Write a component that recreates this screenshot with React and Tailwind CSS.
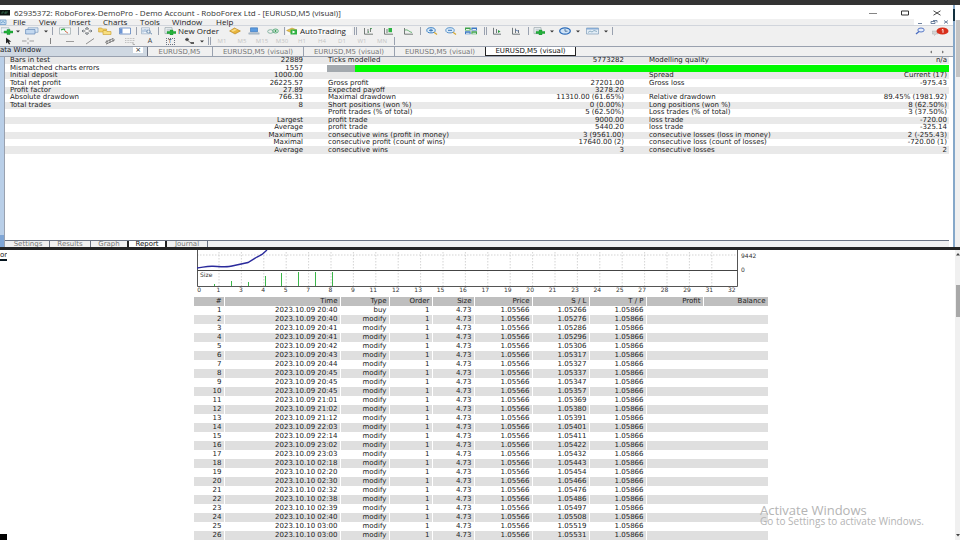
import React from "react";
import clsx from "clsx";

const menuItems = [
  { label: "File", width: "w-[26px]" },
  { label: "View", width: "w-[30px]" },
  { label: "Insert", width: "w-[34px]" },
  { label: "Charts", width: "w-[37px]" },
  { label: "Tools", width: "w-8" },
  { label: "Window", width: "w-11" },
  { label: "Help", width: "w-8" },
];

const timeframes = ["M1", "M5", "M15", "M30", "H1", "H4", "D1", "W1", "MN"];

const reportRows = [
  ["Bars in test", "22889", "Ticks modelled", "5773282", "Modelling quality", "n/a"],
  ["Mismatched charts errors", "1557", null],
  ["Initial deposit", "1000.00", "", "", "Spread", "Current (17)"],
  ["Total net profit", "26225.57", "Gross profit", "27201.00", "Gross loss", "-975.43"],
  ["Profit factor", "27.89", "Expected payoff", "3278.20", "", ""],
  ["Absolute drawdown", "766.31", "Maximal drawdown", "11310.00 (61.65%)", "Relative drawdown", "89.45% (1981.92)"],
  ["Total trades", "8", "Short positions (won %)", "0 (0.00%)", "Long positions (won %)", "8 (62.50%)"],
  ["", "", "Profit trades (% of total)", "5 (62.50%)", "Loss trades (% of total)", "3 (37.50%)"],
  ["", "Largest", "profit trade", "9000.00", "loss trade", "-720.00"],
  ["", "Average", "profit trade", "5440.20", "loss trade", "-325.14"],
  ["", "Maximum", "consecutive wins (profit in money)", "3 (9561.00)", "consecutive losses (loss in money)", "2 (-255.43)"],
  ["", "Maximal", "consecutive profit (count of wins)", "17640.00 (2)", "consecutive loss (count of losses)", "-720.00 (1)"],
  ["", "Average", "consecutive wins", "3", "consecutive losses", "2"],
];

// [time, stop loss]
const trades = [
  ["2023.10.09 20:40", "1.05266"],
  ["2023.10.09 20:40", "1.05276"],
  ["2023.10.09 20:41", "1.05286"],
  ["2023.10.09 20:41", "1.05296"],
  ["2023.10.09 20:42", "1.05306"],
  ["2023.10.09 20:43", "1.05317"],
  ["2023.10.09 20:44", "1.05327"],
  ["2023.10.09 20:45", "1.05337"],
  ["2023.10.09 20:45", "1.05347"],
  ["2023.10.09 20:45", "1.05357"],
  ["2023.10.09 21:01", "1.05369"],
  ["2023.10.09 21:02", "1.05380"],
  ["2023.10.09 21:12", "1.05391"],
  ["2023.10.09 22:03", "1.05401"],
  ["2023.10.09 22:14", "1.05411"],
  ["2023.10.09 23:02", "1.05422"],
  ["2023.10.09 23:03", "1.05432"],
  ["2023.10.10 02:18", "1.05443"],
  ["2023.10.10 02:20", "1.05454"],
  ["2023.10.10 02:30", "1.05466"],
  ["2023.10.10 02:32", "1.05476"],
  ["2023.10.10 02:38", "1.05486"],
  ["2023.10.10 02:39", "1.05497"],
  ["2023.10.10 02:40", "1.05508"],
  ["2023.10.10 03:00", "1.05519"],
  ["2023.10.10 03:00", "1.05531"],
];

const tradeColumns = [
  { label: "#", width: "w-[30px]" },
  { label: "Time", width: "w-[116px]" },
  { label: "Type", width: "w-[49px]" },
  { label: "Order", width: "w-[43px]" },
  { label: "Size", width: "w-[42px]" },
  { label: "Price", width: "w-[58px]" },
  { label: "S / L", width: "w-[57px]" },
  { label: "T / P", width: "w-[57px]" },
  { label: "Profit", width: "w-[57px]" },
  { label: "Balance", width: "w-[65px]" },
];

const axisLabels = [0, 1, 3, 4, 5, 7, 8, 9, 11, 12, 13, 15, 16, 17, 19, 20, 21, 23, 24, 25, 27, 28, 29, 31, 32];

const Svg = ({ w = 12, children }) => (
  <svg width={w} height="8" viewBox={`0 0 ${w} 8`} fill="none" className="shrink-0" aria-hidden="true">
    {children}
  </svg>
);

const Plus = ({ x = 5, y = 2 }) => (
  <path d={`M${x + 2} ${y + 1}h3v1.5h3v2h-3v1.5h-3v-1.5h-3v-2h3z`} fill="#23b03a" stroke="#128a28" strokeWidth=".4" />
);

const icons = {
  addChart: (
    <Svg>
      <path d="M0 .8h8v5H0z" fill="#eef4f8" stroke="#8aa0b0" strokeWidth=".6" />
      <Plus x={4} y={1.5} />
    </Svg>
  ),
  profiles: (
    <Svg w={14}>
      <path d="M3 .8h10v4.500H3z" fill="#dce9f5" stroke="#7c9cc0" strokeWidth=".7" />
      <path d="M.6 2.500h9.400v4.500H.6z" fill="#c3d8ef" stroke="#6288b8" strokeWidth=".7" />
    </Svg>
  ),
  market: (
    <Svg>
      <path d="M.5.8h11v6.400H.5z" fill="#f7fafa" stroke="#8c9aa0" strokeWidth=".6" />
      <path d="M2 2.800l3-.8 1 1.500" stroke="#2aa53c" strokeWidth="1.200" />
      <path d="M6 4l3 2.200" stroke="#d2694a" strokeWidth="1" />
    </Svg>
  ),
  data: (
    <Svg>
      <path d="M6 .5v7M1 4h10M4 2l2-1.500L8 2M4 6l2 1.500L8 6M2.500 2.800L1 4l1.500 1.200M9.500 2.800L11 4 9.500 5.200" stroke="#555d66" strokeWidth=".7" />
      <ellipse cx="6" cy="4" rx="2.500" ry="1.500" fill="#fff" stroke="#777" strokeWidth=".5" />
    </Svg>
  ),
  navigator: (
    <Svg w={14}>
      <path d="M.6 1h3l1 1h4v3h-8z" fill="#f5d46a" stroke="#c79a28" strokeWidth=".6" />
      <path d="M5 3.500h3l1 1h4v3H5z" fill="#f8df80" stroke="#c79a28" strokeWidth=".6" />
    </Svg>
  ),
  terminal: (
    <Svg>
      <path d="M.5 1h11v6H.5z" fill="#fff" stroke="#5b82bd" strokeWidth=".8" />
      <path d="M1 1.400h2.500v5.200H1z" fill="#6d95d4" />
    </Svg>
  ),
  tester: (
    <Svg>
      <path d="M.5.8h8v6H.5z" fill="#eef4fa" stroke="#87a0bb" strokeWidth=".6" />
      <path d="M2 5.500V2.500M4 5V2M6 5.500v-3" stroke="#5c85b4" strokeWidth=".7" />
      <ellipse cx="7.500" cy="4.500" rx="2" ry="1.500" stroke="#6d8cae" strokeWidth=".7" />
      <path d="M9 5.600l2 1.600" stroke="#6d8cae" />
    </Svg>
  ),
  order: (
    <Svg>
      <path d="M1 .6h7v6H1z" fill="#f4f7f8" stroke="#84959c" strokeWidth=".6" />
      <path d="M2.500 2.300h4M2.500 3.800h3" stroke="#8898a0" strokeWidth=".5" />
      <Plus x={4} y={2} />
    </Svg>
  ),
  editor: (
    <Svg>
      <path d="M.6 4L5.500 1l5.900 3-5.400 3z" fill="#e9b53c" stroke="#b17f17" strokeWidth=".6" />
      <path d="M2 3.800l4-2 2 1-4 2z" fill="#f9dc86" />
    </Svg>
  ),
  vps: (
    <Svg>
      <path d="M2.500.8h7v4h-7z" fill="#5b9be0" stroke="#2e6db4" strokeWidth=".6" />
      <path d="M.8 5.800h10.400v1.400H.8z" fill="#b9c8d6" stroke="#7d92a6" strokeWidth=".4" />
    </Svg>
  ),
  signals: (
    <Svg>
      <ellipse cx="3.500" cy="4.500" rx="2.800" ry="1.800" stroke="#7dae9a" strokeWidth=".9" />
      <ellipse cx="8.500" cy="4" rx="2.800" ry="2" stroke="#4fa874" strokeWidth=".9" />
      <ellipse cx="8.500" cy="4" rx="1" ry=".9" fill="#2e9a4c" />
    </Svg>
  ),
  auto: (
    <Svg>
      <path d="M.6 3.500L6 1l5 2-5 3z" fill="#eac44e" stroke="#b08c22" strokeWidth=".5" />
      <path d="M4.500 2.500H11v5H4.500z" fill="#2db141" />
      <path d="M6.500 3.600l3 1.400-3 1.400z" fill="#fff" />
    </Svg>
  ),
  bars: (
    <Svg w={11}>
      <path d="M1.500 1v6.200H10M5 2v4M7.500 1v4" stroke="#55605a" strokeWidth=".8" />
      <path d="M7.500 1.600h1.500M6 5h-1" stroke="#2a9a3c" strokeWidth=".8" />
    </Svg>
  ),
  candles: (
    <Svg w={11}>
      <path d="M1.500 1v6.200H10M4 2v4" stroke="#55605a" strokeWidth=".8" />
      <path d="M5.500 1h3.500v4.200H5.500z" fill="#2eb443" />
    </Svg>
  ),
  line: (
    <Svg w={11}>
      <path d="M1.500 1v6.200H10" stroke="#55605a" strokeWidth=".8" />
      <path d="M2 3c3-1 4 2 7 2.500" stroke="#49a558" strokeWidth=".8" />
    </Svg>
  ),
  zoomIn: (
    <Svg>
      <ellipse cx="5" cy="3.300" rx="4.200" ry="2.600" fill="#d9ebfa" stroke="#3d82c6" />
      <path d="M3 3.300h4M5 1.900v2.800" stroke="#2265ab" strokeWidth=".9" />
      <path d="M8 5.300l3 2.200" stroke="#d6a93a" strokeWidth="1.300" />
    </Svg>
  ),
  zoomOut: (
    <Svg>
      <ellipse cx="5" cy="3.300" rx="4.200" ry="2.600" fill="#d9ebfa" stroke="#5a93cb" />
      <path d="M3 3.300h4" stroke="#2265ab" strokeWidth=".9" />
      <path d="M8 5.300l3 2.200" stroke="#d6a93a" strokeWidth="1.300" />
    </Svg>
  ),
  tile: (
    <Svg>
      <path d="M0 .6h5.600v3H0zM6.400 4.300H12v3H6.400z" fill="#3fa34c" />
      <path d="M6.400.6H12v3H6.400zM0 4.300h5.600v3H0z" fill="#3c78c4" />
      <path d="M1 2h3.600v1H1zM7.400 2H11v1H7.400zM1 5.700h3.600v1H1zM7.400 5.700H11v1H7.400z" fill="#e8f2ee" />
    </Svg>
  ),
  shift: (
    <Svg w={10}>
      <path d="M1.500.8v6.400H9M4.500 2v4" stroke="#505a60" strokeWidth=".8" />
      <path d="M6 3l2.500 1.500L6 6z" fill="#2e9b42" />
    </Svg>
  ),
  scroll: (
    <Svg w={10}>
      <path d="M1.500.8v6.400H9M4.500 1.500V6M7.500 3v3" stroke="#505a60" strokeWidth=".8" />
      <path d="M4.500 3l3 1.200" stroke="#4a6fae" strokeWidth=".8" />
    </Svg>
  ),
  clock: (
    <Svg>
      <ellipse cx="6" cy="4" rx="5.300" ry="3.200" fill="#cfe3f7" stroke="#2d6cb8" strokeWidth="1.300" />
      <path d="M6 2v2.200h2.500" stroke="#27527f" strokeWidth=".7" />
    </Svg>
  ),
  template: (
    <Svg w={13}>
      <path d="M.5 1h12v6H.5z" fill="#e4eef7" stroke="#7f9cb8" strokeWidth=".7" />
      <path d="M.5 1h12v1.500H.5z" fill="#86abd4" />
      <path d="M2 5.500l2-1.500 2 1 2-1.500 3 1" stroke="#6b94ae" strokeWidth=".7" />
    </Svg>
  ),
  cursor: (
    <Svg>
      <path d="M4 .5v6l1.600-1.200L7 7.500l1.200-.5L7 4.800h2.300z" fill="#222" />
    </Svg>
  ),
  crosshair: (
    <Svg>
      <path d="M0 4h4.500M7.500 4H12M6 .8v2M6 5.200v2" stroke="#7b7b7b" strokeWidth=".7" />
    </Svg>
  ),
  vline: (
    <Svg>
      <path d="M6.500 1v6" stroke="#666" strokeWidth=".8" />
    </Svg>
  ),
  hline: (
    <Svg>
      <path d="M2 4.500h8" stroke="#777" strokeWidth=".7" />
    </Svg>
  ),
  trend: (
    <Svg>
      <path d="M2 7l8-5.500" stroke="#666" strokeWidth=".7" />
    </Svg>
  ),
  channel: (
    <Svg>
      <path d="M1 5.500l8-4M2 7.200l9-4.500M3 3v4M6 2v4M9 1v4" stroke="#5d5d5d" strokeWidth=".7" />
    </Svg>
  ),
  fibo: (
    <Svg>
      <path d="M1 1.500h10M1 3.500h10M1 5.500h8" stroke="#a0a0a0" strokeWidth=".6" strokeDasharray="1 .6" />
      <path d="M9 5v2.500h2" stroke="#888" strokeWidth=".6" />
    </Svg>
  ),
  arrows: (
    <Svg>
      <path d="M2 2.500l2-1.500 2 1.500-2 1.500zM4 3l4 3" fill="#444" stroke="#555" strokeWidth=".7" />
      <path d="M7 5h4v2H8z" fill="#5c5c5c" />
    </Svg>
  ),
  search: (
    <Svg>
      <ellipse cx="7" cy="3" rx="3.200" ry="2" fill="#e6effc" stroke="#4a6cc0" strokeWidth=".9" />
      <path d="M5 4.500L2 7" stroke="#4a6cc0" strokeWidth="1.300" />
    </Svg>
  ),
};

const Separator = ({ double }) => (
  <span
    className={clsx("mr-px ml-[2px] h-2 shrink-0 border-l border-gray-400", double ? "w-[3px] border-r" : "w-px")}
  />
);

const Tool = ({ icon, label, width = "w-5" }) => (
  <button type="button" aria-label={label} className={clsx("flex h-full shrink-0 items-center justify-center", width)}>
    {icons[icon]}
  </button>
);

const Caret = ({ label }) => (
  <button type="button" aria-label={label} className="flex h-full w-2 shrink-0 items-center justify-center">
    <svg width="4" height="3" viewBox="0 0 4 3" aria-hidden="true">
      <path d="M0 .5h4L2 2.500z" fill="#333" />
    </svg>
  </button>
);

const TitleBar = () => (
  <header className="flex h-[14px] items-center bg-white pt-px text-[8px] leading-[9px] text-[#333]">
    <svg width="11" height="6" viewBox="0 0 11 6" className="mr-[3px]" aria-hidden="true">
      <path d="M0 0h10v5.500H0z" fill="#0c1410" />
      <path d="M2 4V2h2M5 4V2h3M5 3h2" stroke="#3c7a58" strokeWidth=".7" fill="none" />
    </svg>
    <h1>62935372: RoboForex-DemoPro - Demo Account - RoboForex Ltd - [EURUSD,M5 (visual)]</h1>
    <div className="ml-auto flex items-center">
      <button type="button" aria-label="Minimize" className="flex w-8 justify-center">
        <svg width="8" height="6" viewBox="0 0 8 6"><path d="M0 3.500h8" stroke="#666" strokeWidth=".8" /></svg>
      </button>
      <button type="button" aria-label="Maximize" className="flex w-8 justify-center">
        <svg width="8" height="6" viewBox="0 0 8 6"><path d="M.5 1h7v4h-7z" fill="none" stroke="#333" /></svg>
      </button>
      <button type="button" aria-label="Close" className="flex w-8 justify-center">
        <svg width="8" height="6" viewBox="0 0 8 6"><path d="M.5.8l7 4.400M7.500.8l-7 4.400" stroke="#333" strokeWidth=".9" /></svg>
      </button>
    </div>
  </header>
);

const MenuBar = () => (
  <nav className="flex h-[7px] items-center border-b border-gray-300 text-[8px] leading-[6px] text-[#222]">
    <svg width="7" height="6" viewBox="0 0 7 6" className="mr-[6px]" aria-hidden="true">
      <path d="M0 1h6v4.500H0z" fill="#c9dff2" stroke="#6d9ccb" strokeWidth=".8" />
      <path d="M1 4l2-1.500L5 4" stroke="#4b86bd" strokeWidth=".7" fill="none" />
    </svg>
    {menuItems.map(({ label, width }) => (
      <button key={label} type="button" className={clsx("shrink-0 text-left", width)}>
        {label}
      </button>
    ))}
    <div className="ml-auto flex h-full bg-white">
      {["M4 4.500h4", "M4 2.500h4v2H4zM6 1.500h4v2", "M4 1.500l4 3M8 1.500l-4 3"].map((d) => (
        <button key={d} type="button" aria-label="Chart window control" className="w-[13px]">
          <svg width="12" height="6" viewBox="0 0 12 6"><path d={d} fill="none" stroke="#4c6488" strokeWidth=".8" /></svg>
        </button>
      ))}
    </div>
  </nav>
);

const MainToolbar = () => (
  <div className="flex h-[10px] items-center text-[8px] leading-[8px] text-[#222]">
    <Tool icon="addChart" label="New chart" width="w-[14px]" />
    <Caret label="Chart list" />
    <Tool icon="profiles" label="Profiles" />
    <Caret label="Profile list" />
    <Separator />
    <Tool icon="market" label="Market Watch" width="w-[22px]" />
    <Separator />
    <Tool icon="data" label="Data Window" width="w-[14px]" />
    <Tool icon="navigator" label="Navigator" width="w-[22px]" />
    <Tool icon="terminal" label="Terminal" width="w-[18px]" />
    <Separator />
    <Tool icon="tester" label="Strategy Tester" width="w-[18px]" />
    <Separator />
    <button type="button" className="flex w-[66px] shrink-0 items-center gap-[2px] pl-1 whitespace-nowrap">
      {icons.order}
      New Order
    </button>
    <Tool icon="editor" label="MetaEditor" width="w-[18px]" />
    <Tool icon="vps" label="Virtual hosting" />
    <Tool icon="signals" label="Signals" width="w-[18px]" />
    <Separator />
    <button type="button" className="flex w-[66px] shrink-0 items-center gap-[2px] bg-[#f8f8f8] whitespace-nowrap">
      {icons.auto}
      AutoTrading
    </button>
    <Separator double />
    <Tool icon="bars" label="Bar chart" />
    <Tool icon="candles" label="Candlesticks" />
    <Tool icon="line" label="Line chart" />
    <Separator />
    <Tool icon="zoomIn" label="Zoom in" />
    <Tool icon="zoomOut" label="Zoom out" width="w-[18px]" />
    <Tool icon="tile" label="Tile windows" width="w-[22px]" />
    <Separator double />
    <Tool icon="shift" label="Chart shift" width="w-[18px]" />
    <Tool icon="scroll" label="Auto scroll" />
    <Separator />
    <Tool icon="order" label="Indicators" width="w-[18px]" />
    <Caret label="Indicator list" />
    <Tool icon="clock" label="Periods" width="w-[18px]" />
    <Caret label="Period list" />
    <Tool icon="template" label="Templates" />
    <Caret label="Template list" />
    <Separator />
    <div className="ml-auto flex items-center">
      <Tool icon="search" label="Search" width="w-[22px]" />
      <button type="button" aria-label="Notifications" className="flex w-[22px] items-center justify-center pr-1">
        <svg width="17" height="9" viewBox="0 0 17 9" aria-hidden="true">
          <path d="M0 4h6v3H4L2.500 8.500 2 7H0z" fill="#d4d4d4" stroke="#aaa" strokeWidth=".4" />
          <ellipse cx="10.500" cy="4" rx="6" ry="3.600" fill="#d8301c" />
          <path d="M9.800 3l1.200-.6v3.400" stroke="#fff" strokeWidth=".9" fill="none" />
        </svg>
      </button>
    </div>
  </div>
);

const DrawingToolbar = () => (
  <div className="flex h-[11px] items-center border-b border-gray-400 text-[6px] leading-[8px]">
    <Tool icon="cursor" label="Cursor" width="w-4" />
    <Tool icon="crosshair" label="Crosshair" width="w-6" />
    <Tool icon="vline" label="Vertical line" />
    <Tool icon="hline" label="Horizontal line" />
    <Tool icon="trend" label="Trendline" />
    <Tool icon="channel" label="Channel" />
    <Tool icon="fibo" label="Fibonacci" />
    <button type="button" className="w-5 text-[7px] text-[#444]">A</button>
    <button type="button" className="flex w-5 justify-center">
      <span className="w-[9px] border border-dotted border-gray-500 text-center leading-[5px] text-[#333]">T</span>
    </button>
    <Tool icon="arrows" label="Arrows" width="w-[18px]" />
    <Caret label="Arrow list" />
    <Separator double />
    {timeframes.map((t) => (
      <button key={t} type="button" className="w-5 text-center text-[#c4c4c4]">
        {t}
      </button>
    ))}
    <Separator />
  </div>
);

const ChartTabs = () => (
  <div className="flex h-[10px] items-stretch border-b border-gray-400 text-[7px] leading-[8px] text-[#777]">
    <div className="flex w-[148px] shrink-0 items-start justify-between overflow-hidden border-r border-gray-500 bg-[#cfd8e2] pr-1 leading-[7px] text-[#222]">
      <span className="whitespace-nowrap">ata Window</span>
      <button type="button" aria-label="Close Data Window" className="bg-white px-[2px] leading-[6px]">×</button>
    </div>
    <button type="button" className="w-16 shrink-0 border-r border-transparent">EURUSD,M5</button>
    {[1, 2, 3].map((n) => (
      <button key={n} type="button" className="w-[91px] shrink-0 border-l border-gray-400 whitespace-nowrap">
        EURUSD,M5 (visual)
      </button>
    ))}
    <button type="button" className="w-[91px] shrink-0 border border-t-0 border-[#222] bg-white whitespace-nowrap text-[#111]">
      EURUSD,M5 (visual)
    </button>
    <div className="ml-auto flex items-center gap-2 pr-2">
      <svg width="4" height="4" viewBox="0 0 4 4"><path d="M3 .5v3L1 2z" fill="#777" /></svg>
      <svg width="4" height="4" viewBox="0 0 4 4"><path d="M1 .5v3L3 2z" fill="#777" /></svg>
    </div>
  </div>
);

const Report = () => (
  <table className="h-[97px] w-full table-fixed border-collapse text-[7px] leading-[7px] whitespace-nowrap text-[#222]">
    <colgroup>
      <col className="w-[16%]" />
      <col className="w-[16%]" />
      <col className="w-[20%]" />
      <col className="w-[14%]" />
      <col className="w-[20%]" />
      <col className="w-[14%]" />
    </colgroup>
    <tbody>
      {reportRows.map((row, i) => (
        <tr key={i} className="odd:bg-[#e9e9e9]">
          <td className="py-0 pl-[5px]">{row[0]}</td>
          <td className="py-0 pr-1 text-right">{row[1]}</td>
          {row[2] === null ? (
            <td colSpan={4} className="py-0 pl-5">
              <div className="flex h-[7px] bg-[#00fa00]">
                <div className="w-7 bg-[#a3a9ae]" />
              </div>
            </td>
          ) : (
            <>
              <td className="py-0 pl-[21px]">{row[2]}</td>
              <td className="py-0 pr-1 text-right">{row[3]}</td>
              <td className="py-0 pl-[21px]">{row[4]}</td>
              <td className="py-0 pr-[2px] text-right">{row[5]}</td>
            </>
          )}
        </tr>
      ))}
    </tbody>
  </table>
);

const ReportTabs = () => (
  <div className="flex h-[7px] border-t border-gray-500 bg-[#f0f0f0] pl-[2px] text-[7px] leading-[6px] text-[#777]">
    <button type="button" className="w-[43px] border-r border-gray-500">Settings</button>
    <button type="button" className="w-[41px] border-r border-gray-500">Results</button>
    <button type="button" className="w-9">Graph</button>
    <button type="button" className="w-10 border-x-2 border-[#222] bg-white text-[#111]">Report</button>
    <button type="button" className="w-[41px] border-r border-gray-500">Journal</button>
  </div>
);

const BalanceChart = () => (
  <svg width="574" height="47" viewBox="0 0 574 47" className="block text-[6px]" fill="none">
    {axisLabels.slice(1, -1).map((n, i) => (
      <path key={n} d={`M${25 + i * 22.4} 2V36`} stroke="#c8c8c8" strokeWidth=".8" strokeDasharray="1.5 1.5" />
    ))}
    <path d="M3 5H543" stroke="#c8c8c8" strokeWidth=".8" strokeDasharray="1.500 1.500" />
    <path d="M3.500 0V36.500M3.500 36.500H543.500M543.500 0V36.500" stroke="#555" />
    <path d="M3.500 20.500H543.500" stroke="#444" strokeWidth="1.200" />
    <path d="M3 18C9 17.500 12 16 19 16.300S34 17.500 38 16L54 12.500 63 7 68 4.500 73 0" stroke="#2a2a9c" strokeWidth="1.400" />
    <path d="M20.500 36v-2M37.500 36v-5M54.500 36v-4M71.500 36V26M87.500 36V23M104.500 36V22M121.500 36V22M138.500 36V22" stroke="#3cb64a" />
    <g fill="#333">
      <text x="6" y="27">Size</text>
      <text x="547" y="8">9442</text>
      <text x="547" y="22">0</text>
      {axisLabels.map((n, i) => (
        <text key={n} x={i === 0 ? 7 : 4 + i * 22.4} y="42" textAnchor="end">
          {n}
        </text>
      ))}
    </g>
  </svg>
);

const TradeTable = () => (
  <table className="w-full table-fixed border-collapse text-right text-[7px] leading-[9px] whitespace-nowrap text-[#222]">
    <thead>
      <tr className="bg-[#bfbfbf]">
        {tradeColumns.map(({ label, width }) => (
          <th key={label} scope="col" className={clsx("border-r border-white p-0 pr-[2px] font-normal", width)}>
            {label}
          </th>
        ))}
      </tr>
    </thead>
    <tbody>
      {trades.map(([time, stopLoss], i) => (
        <tr key={stopLoss} className="even:bg-[#dfdfdf]">
          {[i + 1, time, i === 0 ? "buy" : "modify", 1, "4.73", "1.05566", stopLoss, "1.05866"].map((value, n) => (
            <td key={n} className="border-r border-white p-0 pr-[2px]">
              {value}
            </td>
          ))}
          <td colSpan={2} className="p-0" />
        </tr>
      ))}
    </tbody>
  </table>
);

const App = () => {
  return (
    <div className="relative flex h-screen flex-col overflow-hidden bg-white font-['DejaVu_Sans',sans-serif]">
      <div className="h-[5px] shrink-0 bg-[#333]" />
      <section className="flex h-[242px] shrink-0">
        <div className="flex min-w-0 flex-1 flex-col bg-[#f0f0f0]">
          <div className="font-['Open_Sans',sans-serif]">
            <TitleBar />
            <MenuBar />
            <MainToolbar />
            <DrawingToolbar />
          </div>
          <ChartTabs />
          <div className="flex flex-1">
            <div className="flex w-[5px] flex-col justify-end border-r border-gray-400 bg-[#b9cfe8]">
              <div className="h-3 bg-[#7fa6d6]" />
            </div>
            <div className="flex min-w-0 flex-1 flex-col justify-between bg-white pr-1">
              <Report />
              <ReportTabs />
            </div>
          </div>
        </div>
        <div className="w-[2px] bg-[#86a8c9]">
          <div className="mt-1 h-3 bg-[#12303f]" />
        </div>
        <div className="w-[5px] bg-[#f0f0f0]">
          <div className="h-[15px] bg-white" />
          <div className="ml-px h-[57px] bg-[#c4c4c4]" />
        </div>
      </section>
      <div className="h-[3px] shrink-0 bg-[#242424]" />
      <section className="flex min-h-0 flex-1">
        <aside className="flex w-[7px] flex-col justify-between">
          <div className="h-[11px] overflow-hidden border-b-2 border-[#06151f] text-[7px] leading-[10px] text-[#222]">or</div>
          <div className="h-[6px] bg-black" />
        </aside>
        <main className="min-w-0 flex-1 overflow-hidden">
          <div className="mx-auto w-[574px]">
            <BalanceChart />
            <TradeTable />
          </div>
        </main>
        <div className="flex w-[5px] flex-col items-center justify-between bg-[#f0f0f0] py-[3px]">
          <svg width="4" height="3" viewBox="0 0 4 3"><path d="M0 2.500h4L2 0z" fill="#444" /></svg>
          <div className="mt-[29px] mb-auto ml-px h-8 w-1 bg-[#a8a8a8]" />
          <svg width="4" height="3" viewBox="0 0 4 3"><path d="M0 0h4L2 2.500z" fill="#444" /></svg>
        </div>
      </section>
      <div className="absolute right-8 bottom-[14px] w-[168px] font-['Open_Sans',sans-serif] whitespace-nowrap text-[#b4b4b4]">
        <p className="text-[13px] leading-[12px]">Activate Windows</p>
        <p className="text-[10px] leading-[10px]">Go to Settings to activate Windows.</p>
      </div>
    </div>
  );
};

export default App;
